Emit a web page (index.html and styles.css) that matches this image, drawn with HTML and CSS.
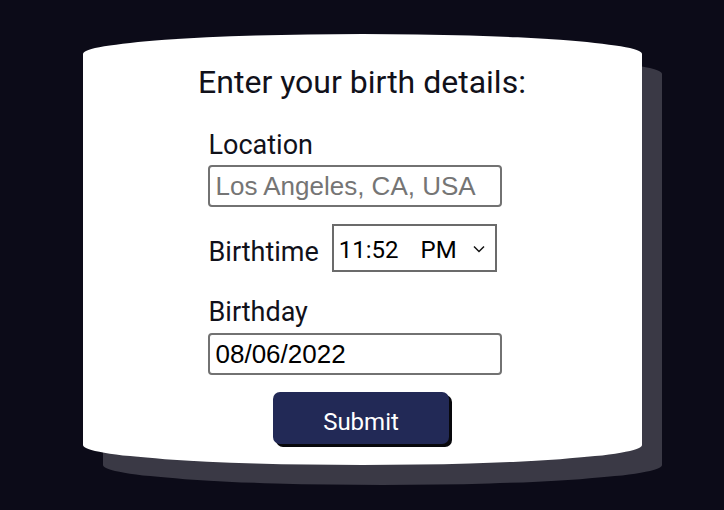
FILE: index.html
```html
<!DOCTYPE html>
<html lang="en">
<head>
<meta charset="utf-8">
<title>Birth details</title>
<link rel="stylesheet" href="styles.css">
</head>
<body>
<main class="card">
  <h1 class="title">Enter your birth details:</h1>
  <form class="form">
    <label class="label" for="loc">Location</label>
    <input class="field" id="loc" type="text" placeholder="Los Angeles, CA, USA">
    <div class="time-row">
      <span class="label label-inline">Birthtime</span>
      <div class="time-select">
        <span class="time-value">11:52</span>
        <span class="time-ampm">PM</span>
        <svg class="chevron" width="12" height="8" viewBox="0 0 12 8"><polyline points="1,1.5 6,6.5 11,1.5" fill="none" stroke="#111" stroke-width="1.5"/></svg>
      </div>
    </div>
    <label class="label label-birthday" for="bday">Birthday</label>
    <input class="field field-date" id="bday" type="text" value="08/06/2022">
    <div class="actions">
      <button class="submit" type="button">Submit</button>
    </div>
  </form>
</main>
</body>
</html>
```
FILE: styles.css
```css
html, body {
  margin: 0;
  padding: 0;
}
body {
  background: #0c0b18;
  min-height: 510px;
  font-family: Roboto, "Noto Sans", sans-serif;
  color: #11111a;
}
.card {
  box-sizing: border-box;
  width: 559px;
  height: 431px;
  margin: 34px auto 0;
  padding-top: 29px;
  background: #ffffff;
  border-radius: 50% / 20px;
  box-shadow: 20px 20px 0 #3a3945;
}
.title {
  margin: 0;
  font-size: 32px;
  line-height: 38px;
  font-weight: 400;
  text-align: center;
  color: #11111a;
}
.form {
  width: 309px;
  margin: 28px auto 0;
  display: flex;
  flex-direction: column;
  align-items: flex-start;
}
.label {
  display: block;
  font-size: 27px;
  line-height: 32px;
  margin: 0 0 4px 1px;
}
.field {
  box-sizing: border-box;
  width: 294px;
  height: 42px;
  margin: 0;
  padding: 0 6px;
  border: 2px solid #727272;
  border-radius: 4px;
  font-family: "Liberation Sans", Arial, sans-serif;
  font-size: 26px;
  color: #000;
  background: #fff;
  outline: none;
}
.field::placeholder {
  color: #757575;
  opacity: 1;
}
.time-row {
  display: flex;
  align-items: center;
  margin-top: 17px;
  height: 48px;
}
.label-inline {
  margin: 8px 13px 0 1px;
}
.time-select {
  box-sizing: border-box;
  width: 165px;
  height: 48px;
  border: 2px solid #6b6b6b;
  display: flex;
  align-items: center;
  padding: 0 10px 0 5px;
  font-size: 24px;
  color: #000;
}
.time-value {
  margin-top: 4px;
}
.time-ampm {
  margin: 4px 0 0 22px;
}
.chevron {
  margin-left: auto;
  margin-top: 2px;
}
.label-birthday {
  margin-top: 24px;
  margin-bottom: 5px;
}
.actions {
  align-self: stretch;
  display: flex;
  justify-content: center;
  margin-top: 17px;
  padding-right: 2px;
}
.submit {
  box-sizing: border-box;
  width: 176px;
  height: 52px;
  padding: 8px 0 0;
  border: none;
  border-radius: 7px;
  background: #222956;
  color: #ffffff;
  font-family: Roboto, "Noto Sans", sans-serif;
  font-size: 24px;
  box-shadow: 3px 3px 0 #08080c;
  cursor: pointer;
}
```
